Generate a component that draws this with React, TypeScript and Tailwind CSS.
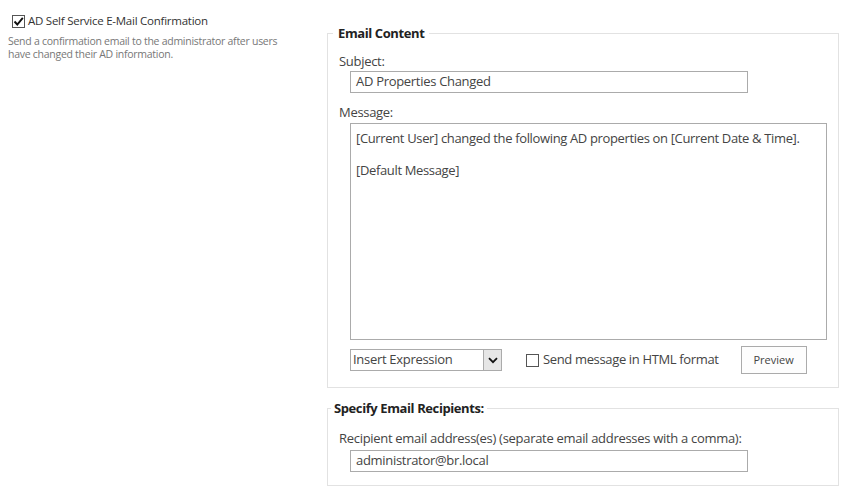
import React from "react";

const font = { fontFamily: '"Segoe UI", "Open Sans", "Noto Sans", sans-serif' };

function CheckMark() {
  return (
    <svg width="11" height="11" viewBox="0 0 11 11" className="block">
      <path d="M1.5 5.5 L4.3 8.5 L9.8 1.8" fill="none" stroke="#111" strokeWidth="1.9" />
    </svg>
  );
}

export default function App() {
  return (
    <div className="w-[843px] h-[490px] bg-white text-[#444] flex overflow-hidden tracking-[-0.3px]" style={font}>
      {/* left column */}
      <div className="w-[327px] shrink-0 pt-[13px] pl-[12px] pr-[30px]">
        <div className="flex items-center gap-[3px] h-[16px]">
          <span className="w-[13px] h-[13px] border border-[#555] bg-white flex items-center justify-center">
            <CheckMark />
          </span>
          <span className="text-[11.5px] text-[#333] leading-[16px] tracking-[-0.25px]">AD Self Service E-Mail Confirmation</span>
        </div>
        <p className="-ml-[4px] mt-[6px] text-[10.5px] leading-[13px] text-[#777] tracking-[-0.27px]">
          Send a confirmation email to the administrator after users have changed their AD information.
        </p>
      </div>

      {/* right column */}
      <div className="w-[512px] shrink-0 pt-[24px]">
        <fieldset className="border border-[#e2e2e2] pl-[11px] pr-[11px] pb-[13px]">
          <legend className="-ml-[6px] px-[5px] text-[13px] font-bold text-[#222] leading-[18px] tracking-[-0.4px]">
            Email Content
          </legend>
          <div className="mt-[10px] text-[13px] leading-[18px]">Subject:</div>
          <div className="ml-[11px] mt-[1px] w-[398px] h-[22px] border border-[#ababab] px-[5px] flex items-center text-[13px] text-[#444]">
            AD Properties Changed
          </div>
          <div className="mt-[10px] text-[13px] leading-[18px]">Message:</div>
          <div className="ml-[11px] mt-[2px] w-[477px] h-[217px] border border-[#ababab] px-[5px] pt-[6px] text-[13px] leading-[16px] text-[#444] tracking-[-0.35px]">
            <div className="whitespace-nowrap">[Current User] changed the following AD properties on [Current Date &amp; Time].</div>
            <div className="h-[16px]" />
            <div>[Default Message]</div>
          </div>
          <div className="ml-[11px] mt-[6px] flex items-center h-[28px]">
            <div className="w-[152px] h-[22px] border border-[#ababab] flex items-stretch">
              <div className="flex-1 flex items-center pl-[2px] text-[13px] text-[#444]">Insert Expression</div>
              <div className="w-[18px] border-l border-[#ababab] bg-[#e6e6e6] flex items-center justify-center">
                <svg width="10" height="7" viewBox="0 0 10 7">
                  <path d="M1 1.2 L5 5.2 L9 1.2" fill="none" stroke="#111" strokeWidth="1.8" />
                </svg>
              </div>
            </div>
            <div className="ml-[24px] flex items-center gap-[4px]">
              <span className="w-[13px] h-[13px] border border-[#555] bg-white" />
              <span className="text-[13px] text-[#444] tracking-[-0.35px]">Send message in HTML format</span>
            </div>
            <div className="ml-[22px] w-[66px] h-[28px] border border-[#ababab] bg-[#fdfdfd] flex items-center justify-center text-[11px] text-[#444] tracking-normal">
              Preview
            </div>
          </div>
        </fieldset>

        <fieldset className="mt-[11px] border border-[#e2e2e2] pl-[11px] pr-[11px] pb-[13px]">
          <legend className="-ml-[8px] px-[3px] text-[13px] font-bold text-[#222] leading-[18px] tracking-[-0.4px]">
            Specify Email Recipients:
          </legend>
          <div className="mt-[12px] text-[13px] leading-[18px]">
            Recipient email address(es) (separate email addresses with a comma):
          </div>
          <div className="ml-[11px] mt-[3px] w-[398px] h-[22px] border border-[#ababab] px-[5px] flex items-center text-[13px] text-[#444]">
            administrator@br.local
          </div>
        </fieldset>
      </div>
    </div>
  );
}
